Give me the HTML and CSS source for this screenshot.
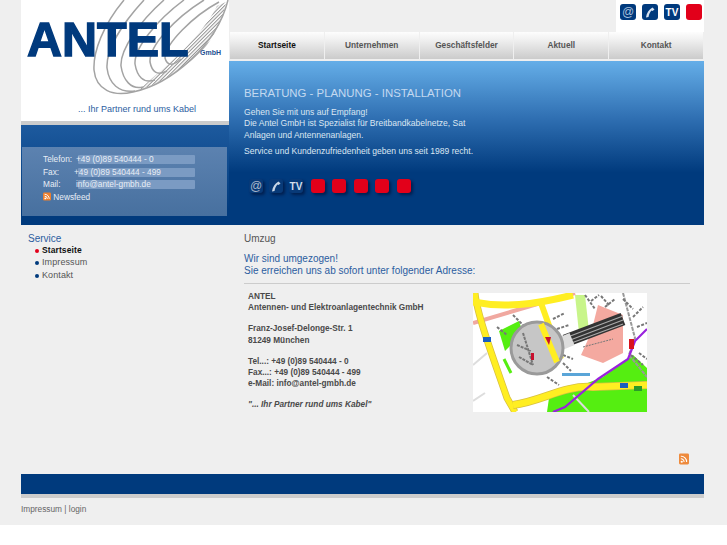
FILE: index.html
```html
<!DOCTYPE html>
<html lang="de">
<head>
    <meta charset="UTF-8">
    <meta name="viewport" content="width=device-width, initial-scale=1.0">
    <title>ANTEL GmbH</title>
    <link rel="stylesheet" href="styles.css">
</head>
<body>
<div class="page">
    <div class="header">
        <div class="header-left">
            <div class="logo">
                <svg class="swoosh" width="208" height="100" viewBox="0 0 208 100">
                    <defs>
                        <pattern id="hatch" width="2.500" height="2.500" patternUnits="userSpaceOnUse" patternTransform="rotate(-45)">
                            <rect width="2.500" height="1" fill="#8f8f8f"/>
                        </pattern>
                    </defs>
                    <path d="M118 90 C145 82 170 62 182 50 C194 36 203 16 205 2 L196 6 C186 26 165 50 136 74 Z" fill="url(#hatch)"/>
                    <g fill="none" stroke="#a3a3a3" stroke-width="1.500">
                        <path d="M103 0 C82 25 72 52 73 70 C75 90 92 97 112 92 C150 84 196 45 207 0"/>
                        <path d="M123 0 C100 25 85 50 86 68 C88 84 98 93 114 91"/>
                        <path d="M143 0 C118 22 99 50 100 66 C102 80 110 90 122 87"/>
                        <path d="M163 0 C136 20 113 48 114 64 C116 76 122 84 134 80"/>
                        <path d="M183 0 C154 18 128 46 129 62 C131 72 136 76 146 71"/>
                        <path d="M198 2 C172 16 144 44 144 58 C146 66 152 66 160 59"/>
                    </g>
                </svg>
                <div class="logo-name">ANTEL</div>
                <div class="logo-gmbh">GmbH</div>
                <div class="logo-claim">... Ihr Partner rund ums Kabel</div>
            </div>
            <div class="info-area">
                <div class="info-box">
                    <div class="info-row"><span class="info-label">Telefon:</span><span class="info-value">+49 (0)89 540444 - 0</span></div>
                    <div class="info-row"><span class="info-label">Fax:</span><span class="info-value fax">+49 (0)89 540444 - 499</span></div>
                    <div class="info-row"><span class="info-label">Mail:</span><span class="info-value">info@antel-gmbh.de</span></div>
                    <div class="info-feed">
                        <svg class="rss" width="8" height="9" viewBox="0 0 10 10"><rect width="10" height="10" rx="1.5" fill="#ee7f2d"/><circle cx="2.8" cy="7.4" r="1.1" fill="#fff"/><path d="M2 4.600a3.400 3.400 0 0 1 3.400 3.400M2 2.200A5.800 5.800 0 0 1 7.800 8" fill="none" stroke="#fff" stroke-width="1.200"/></svg>
                        Newsfeed
                    </div>
                </div>
            </div>
        </div>
        <div class="header-right">
            <div class="top-row">
                <div class="top-icons">
                    <span class="icon icon-blue">@</span>
                    <span class="icon icon-blue"><svg width="14" height="14" viewBox="0 0 14 14"><path d="M3 12.500 C3.500 8 6 4.500 9.500 2.500 L11.500 4.500 L9.500 6 L8.500 5.500 C7 7 6 9 5.500 12 Z" fill="#d8e4f2"/></svg></span>
                    <span class="icon icon-blue icon-tv">TV</span>
                    <span class="icon icon-red"></span>
                </div>
            </div>
            <div class="nav">
                <a class="nav-tab active">Startseite</a>
                <a class="nav-tab">Unternehmen</a>
                <a class="nav-tab">Geschäftsfelder</a>
                <a class="nav-tab">Aktuell</a>
                <a class="nav-tab">Kontakt</a>
            </div>
            <div class="hero">
                <h1>BERATUNG - PLANUNG - INSTALLATION</h1>
                <p>Gehen Sie mit uns auf Empfang!<br>Die Antel GmbH ist Spezialist für Breitbandkabelnetze, Sat<br>Anlagen und Antennenanlagen.</p>
                <p>Service und Kundenzufriedenheit geben uns seit 1989 recht.</p>
                <div class="hero-icons">
                    <span class="hicon hicon-dark at">@</span>
                    <span class="hicon hicon-dark"><svg width="14" height="14" viewBox="0 0 14 14"><path d="M3 12.500 C3.500 8 6 4.500 9.500 2.500 L11.500 4.500 L9.500 6 L8.500 5.500 C7 7 6 9 5.500 12 Z" fill="#c9d6e6"/></svg></span>
                    <span class="hicon hicon-dark tv">TV</span>
                    <span class="hicon hicon-red"></span>
                    <span class="hicon hicon-red"></span>
                    <span class="hicon hicon-red"></span>
                    <span class="hicon hicon-red"></span>
                    <span class="hicon hicon-red"></span>
                </div>
            </div>
        </div>
    </div>

    <div class="main">
        <div class="sidebar">
            <div class="side-title">Service</div>
            <ul class="side-menu">
                <li class="current">Startseite</li>
                <li>Impressum</li>
                <li>Kontakt</li>
            </ul>
        </div>
        <div class="content">
            <h2>Umzug</h2>
            <div class="lead">Wir sind umgezogen!<br>Sie erreichen uns ab sofort unter folgender Adresse:</div>
            <div class="address-row">
                <div class="address">
                    <p>ANTEL<br>Antennen- und Elektroanlagentechnik GmbH</p>
                    <p>Franz-Josef-Delonge-Str. 1<br>81249 München</p>
                    <p>Tel...: +49 (0)89 540444 - 0<br>Fax...: +49 (0)89 540444 - 499<br>e-Mail: info@antel-gmbh.de</p>
                    <p class="claim">"... Ihr Partner rund ums Kabel"</p>
                </div>
                <svg class="map" width="174" height="119" viewBox="0 0 174 119">
                    <rect width="174" height="119" fill="#fff"/>
                    <polygon points="125,12 150,22 150,60 130,70 108,62 118,40" fill="#f4a9a0"/>
                    <polygon points="74,119 76,105 130,84 160,62 174,75 174,119" fill="#55ee11"/>
                    <polygon points="102,2 112,2 116,38 106,40" fill="#c8f58a"/>
                    <polygon points="26,38 46,28 50,40 32,58" fill="#55ee11"/>
                    <g fill="none">
                        <path d="M0 30 L102 0" stroke="#f0a8a0" stroke-width="4"/>
                        <path d="M2 0 C4 22 22 70 34 105 L42 119" stroke="#d8c040" stroke-width="7"/>
                        <path d="M2 0 C4 22 22 70 34 105 L42 119" stroke="#ffee22" stroke-width="5.500"/>
                        <path d="M0 9 C30 15 60 12 100 2" stroke="#ffee22" stroke-width="7"/>
                        <path d="M68 10 L88 66" stroke="#ffee22" stroke-width="6"/>
                        <path d="M40 112 C70 108 90 92 120 94 L174 92" stroke="#d8c040" stroke-width="8"/>
                        <path d="M40 112 C70 108 90 92 120 94 L174 92" stroke="#ffee22" stroke-width="6.500"/>
                        <path d="M31 66 L38 80" stroke="#55ee11" stroke-width="3"/>
                        <path d="M0 72 L14 60 M12 100 L0 108 M100 102 L116 119" stroke="#ddd" stroke-width="2"/>
                        <path d="M150 0 L162 45 L156 62 L174 84" stroke="#999" stroke-width="2" stroke-dasharray="4 1"/>
                        <path d="M80 119 L92 114 L125 86 L155 66 L162 48 L174 36" stroke="#9922dd" stroke-width="2.200"/>
                        <path d="M112 2 L122 16 M118 8 L126 2 M128 3 L136 12 M132 14 L142 6 M150 6 L160 16 M160 24 L170 14 M164 34 L174 30 M158 62 L170 72 M166 60 L174 66" stroke="#777" stroke-width="2" stroke-dasharray="3 1.500"/>
                        <path d="M40 22 L52 34 M24 34 L34 42 M80 26 L92 20 M84 36 L96 32 M74 84 L86 92 M90 62 L100 66 M90 70 L98 78" stroke="#777" stroke-width="2" stroke-dasharray="3 1.500"/>
                        <path d="M110 54 L140 46" stroke="#777" stroke-width="1" stroke-dasharray="2 1"/>
                    </g>
                    <rect x="10" y="44" width="8" height="5" fill="#1a5fc0"/>
                    <rect x="147" y="90" width="8" height="5" fill="#1a5fc0"/>
                    <rect x="161" y="93" width="8" height="5" fill="#2a9a2a"/>
                    <rect x="89" y="80" width="28" height="3" fill="#5aa5d8"/>
                    <rect x="156" y="46" width="5" height="10" fill="#d8121c"/>
                    <path d="M92 48 L150 26" stroke="#333" stroke-width="13"/>
                    <path d="M92 45 L150 23 M92 49 L150 27 M93 52 L150 31" stroke="#aaa" stroke-width="1.200"/>
                    <path d="M87 51 L99 46" stroke="#ddd" stroke-width="13"/>
                    <circle cx="64" cy="55" r="26" fill="#c6c6c6" stroke="#9a9a9a" stroke-width="3"/>
                    <path d="M68 31 L84 69" stroke="#ffee22" stroke-width="6"/>
                    <path d="M50 40 L60 72 M44 52 L58 58 M46 64 L60 72" stroke="#777" stroke-width="2" stroke-dasharray="3 1"/>
                    <polygon points="72,44 78,44 76,52" fill="#c8102e"/>
                    <rect x="58" y="60" width="3" height="7" fill="#c8102e"/>
                </svg>
            </div>
        </div>
    </div>

    <div class="feed-row">
        <svg width="10" height="12" viewBox="0 0 11 12"><rect width="11" height="12" rx="1.500" fill="#ee8a3c"/><circle cx="3" cy="9" r="1.200" fill="#fff"/><path d="M2 5.800a3.400 3.400 0 0 1 3.600 3.400M2 3a6 6 0 0 1 6.400 6.200" fill="none" stroke="#fff" stroke-width="1.200"/></svg>
    </div>
    <div class="footer-bar"></div>
    <div class="footer-links">Impressum | login</div>
</div>
</body>
</html>
```

FILE: styles.css
```css
html {
    background-color: #fff;
}

body {
    margin: 0;
    height: 525px;
    overflow: hidden;
    background-color: #efefef;
    color: #555;
    font-family: 'Liberation Sans', Arial, sans-serif;
    font-size: 8.300px;
}

.page {
    width: 683px;
    margin-left: 21px;
}

/* header */
.header {
    display: flex;
    height: 225px;
}

.header-left {
    width: 208px;
    display: flex;
    flex-direction: column;
}

.logo {
    position: relative;
    height: 121px;
    background: #fff;
    border-bottom: 4px solid #ccc;
    overflow: hidden;
}

.swoosh {
    position: absolute;
    left: 0;
    top: 0;
}

.logo-name {
    position: absolute;
    left: 6px;
    top: 13px;
    color: #003a7d;
    font-size: 48.500px;
    font-weight: bold;
    line-height: 52px;
    -webkit-text-stroke: 1.400px #003a7d;
}

.logo-gmbh {
    position: absolute;
    left: 179px;
    top: 49px;
    color: #1d4f91;
    font-size: 7px;
    font-weight: bold;
}

.logo-claim {
    position: absolute;
    left: 57px;
    top: 104px;
    color: #2c5d9f;
    font-size: 9px;
}

.info-area {
    flex: 1;
    padding: 22px 1px 9px;
    background: linear-gradient(#1d5a9e, #003a7d 85%);
}

.info-box {
    height: 69px;
    width: 205px;
    box-sizing: border-box;
    padding: 6px 0 0 21px;
    background: linear-gradient(#5c82b0, #47709f);
    color: #e8eef6;
}

.info-row {
    display: flex;
    height: 12.500px;
    line-height: 12px;
}

.info-label {
    width: 35px;
}

.info-value {
    width: 117px;
    height: 9px;
    margin-top: 2px;
    line-height: 9px;
    background: #7b9bc3;
    border-radius: 1px;
    text-indent: -2px;
    white-space: nowrap;
}

.info-value.fax {
    text-indent: -4px;
}

.info-feed {
    line-height: 12px;
}

.rss {
    vertical-align: -1px;
}

.header-right {
    flex: 1;
    display: flex;
    flex-direction: column;
}

.top-row {
    height: 32px;
    display: flex;
    justify-content: flex-end;
}

.top-icons {
    width: 88px;
    background: #fff;
    display: flex;
    gap: 6px;
    padding: 4px 0 0 4px;
    box-sizing: border-box;
}

.icon {
    width: 16px;
    height: 16px;
    border-radius: 3px;
    display: flex;
    align-items: center;
    justify-content: center;
    font-size: 12px;
}

.icon-blue {
    background: #003a7d;
    color: #a9c0dc;
}

.icon-tv {
    color: #fff;
    font-size: 10px;
    font-weight: bold;
}

.icon-red {
    background: #e2001a;
}

.nav {
    display: flex;
    gap: 1px;
    height: 28px;
    padding: 0 1px;
    margin-bottom: 1px;
}

.nav-tab {
    flex: 1;
    text-align: center;
    line-height: 26px;
    height: 27px;
    background: linear-gradient(#fdfdfd, #f2f2f2 25%, #cbcbcb);
    color: #555;
    font-weight: bold;
}

.nav-tab.active {
    color: #111;
}

.hero {
    flex: 1;
    padding: 25px 15px 0;
    background: linear-gradient(#65aee8, #2f6fb2 35%, #003a7d 68%);
    color: #dbe6f2;
    font-size: 8.550px;
}

.hero h1 {
    margin: 0 0 7px;
    font-size: 11.400px;
    font-weight: normal;
    line-height: 14px;
    color: #c3d9f0;
}

.hero p {
    margin: 0 0 5px;
    line-height: 11.300px;
}

.hero-icons {
    display: flex;
    gap: 6px;
    margin: 22px 0 0 5px;
}

.hicon {
    width: 14px;
    height: 14px;
    border-radius: 3px;
    display: flex;
    align-items: center;
    justify-content: center;
    box-shadow: 2px 2px 3px rgba(0, 20, 60, 0.7);
}

.hicon-dark {
    background: #083a78;
    color: #a7b6ca;
}

.hicon-dark.at {
    font-size: 12px;
}

.hicon-dark.tv {
    color: #d5dfea;
    font-size: 10px;
    font-weight: bold;
}

.hicon-red {
    margin-left: 1.500px;
    background: #e2001a;
}

/* main */
.main {
    display: flex;
    height: 229px;
}

.sidebar {
    width: 208px;
    padding: 8px 0 0 7px;
    box-sizing: border-box;
}

.side-title {
    color: #2c5d9f;
    font-size: 10px;
    line-height: 12px;
}

.side-menu {
    margin: 0;
    padding: 0 0 0 14px;
    list-style: none;
    font-size: 9px;
    letter-spacing: 0.100px;
}

.side-menu li {
    position: relative;
    line-height: 12.300px;
}

.side-menu li::before {
    content: "";
    position: absolute;
    left: -7px;
    top: 5px;
    width: 4px;
    height: 4px;
    border-radius: 50%;
    background: #003a7d;
}

.side-menu li.current {
    margin-top: -1px;
    color: #111;
    font-size: 8.500px;
    font-weight: bold;
}

.side-menu li.current::before {
    background: #e2001a;
}

.content {
    flex: 1;
    padding: 7px 14px 0 15px;
}

.content h2 {
    margin: 0 0 8px;
    color: #555;
    font-size: 10px;
    font-weight: normal;
    line-height: 13px;
}

.lead {
    padding-bottom: 6px;
    border-bottom: 1px solid #ccc;
    color: #2c5d9f;
    font-size: 10px;
    line-height: 12px;
}

.address-row {
    display: flex;
    padding-top: 7px;
}

.address {
    width: 225px;
    padding-left: 4px;
    color: #4a4a4a;
    font-size: 8.250px;
    font-weight: bold;
    line-height: 11.200px;
}

.address p {
    margin: 0 0 10px;
}

.address .claim {
    font-style: italic;
}

.map {
    display: block;
    margin-top: 2px;
}

/* footer */
.feed-row {
    display: flex;
    justify-content: flex-end;
    height: 20px;
    padding-right: 15px;
    margin-top: -1px;
}

.footer-bar {
    height: 20px;
    margin-top: 1px;
    background: #003a7d;
    border-bottom: 4px solid #ccc;
}

.footer-links {
    padding-top: 5px;
    line-height: 12px;
    color: #666;
}
```
